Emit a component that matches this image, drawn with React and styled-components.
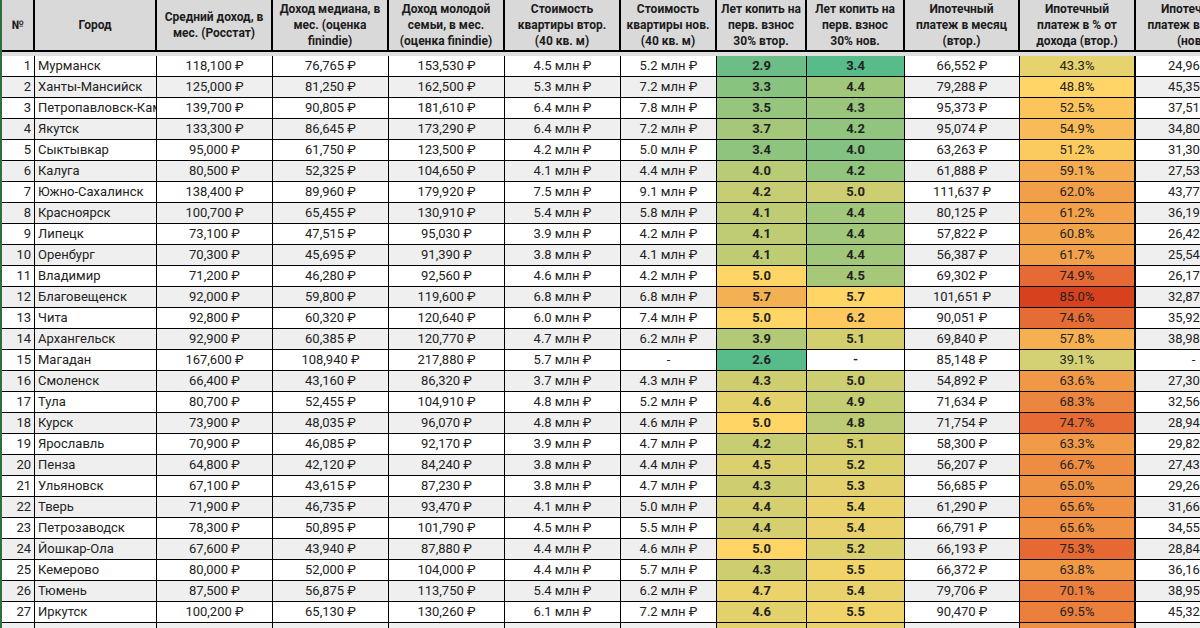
import React from "react";
import styled, { createGlobalStyle } from "styled-components";

const COLS = "33px 122px 116px 116px 116px 116px 96px 90px 98px 115px 116px 116px";

const GlobalStyle = createGlobalStyle`
  html, body { margin: 0; padding: 0; background: #ffffff; }
  body { font-family: Roboto, "Liberation Sans", Arial, sans-serif; }
  * { box-sizing: border-box; }
`;

const Sheet = styled.div`
  width: 1200px;
  height: 628px;
  overflow: hidden;
  border-left: 2px solid #2f6f3e;
  background: #fff;
`;

const Table = styled.div`
  width: 1252px;
`;

const HeaderRow = styled.div`
  display: grid;
  grid-template-columns: ${COLS};
  height: 52px;
  background: #d9d9d9;
  border-bottom: 2px solid #000;
`;

const HeadCell = styled.div`
  display: flex;
  align-items: center;
  justify-content: center;
  text-align: center;
  font-weight: 700;
  font-size: 12px;
  line-height: 16px;
  color: #1c1c1c;
  border-right: 2px solid #000;
  white-space: nowrap;
  overflow: hidden;
`;

const Band = styled.div`
  height: 4px;
  background: #dedede;
`;

const Row = styled.div`
  display: grid;
  grid-template-columns: ${COLS};
  height: 21px;
  border-bottom: 1px solid #000;
  background: ${(p) => (p.$even ? "#efefef" : "#ffffff")};
`;

const Cell = styled.div`
  font-size: 13px;
  line-height: 20px;
  color: #222;
  white-space: nowrap;
  overflow: hidden;
  text-align: ${(p) => p.$align || "center"};
  padding: ${(p) => (p.$align === "right" ? "0 3px 0 0" : p.$align === "left" ? "0 0 0 3px" : "0")};
  border-right: ${(p) => (p.$thick ? "2px" : "1px")} solid #000;
  font-weight: ${(p) => (p.$bold ? 700 : 400)};
  background: ${(p) => p.$bg || "transparent"};
`;

function hex(h) {
  return [1, 3, 5].map((i) => parseInt(h.slice(i, i + 2), 16));
}
function scale(stops, v) {
  if (v <= stops[0][0]) return stops[0][1];
  for (let i = 0; i < stops.length - 1; i++) {
    const [a, ca] = stops[i];
    const [b, cb] = stops[i + 1];
    if (v <= b) {
      const t = (v - a) / (b - a);
      const A = hex(ca);
      const B = hex(cb);
      const c = A.map((x, k) => Math.round(x + (B[k] - x) * t));
      return `rgb(${c[0]},${c[1]},${c[2]})`;
    }
  }
  return stops[stops.length - 1][1];
}

const VTOR = [[2.6, "#57bb8a"], [5.0, "#ffd666"], [5.7, "#f4b154"]];
const NOV = [[3.4, "#57bb8a"], [5.7, "#ffd666"], [6.2, "#fdc95f"]];
const PCT = [
  [39.1, "#d3d173"],
  [48.8, "#fed566"],
  [52.5, "#fbc55c"],
  [55, "#f9bb57"],
  [62, "#f29f49"],
  [75, "#e66a35"],
  [85, "#d8411e"],
];

const headers = [
  ["№"],
  ["Город"],
  ["Средний доход, в", "мес. (Росстат)"],
  ["Доход медиана, в", "мес. (оценка", "finindie)"],
  ["Доход молодой", "семьи, в мес.", "(оценка finindie)"],
  ["Стоимость", "квартиры втор.", "(40 кв. м)"],
  ["Стоимость", "квартиры нов.", "(40 кв. м)"],
  ["Лет копить на", "перв. взнос", "30% втор."],
  ["Лет копить на", "перв. взнос", "30% нов."],
  ["Ипотечный", "платеж в месяц", "(втор.)"],
  ["Ипотечный", "платеж в % от", "дохода (втор.)"],
  ["Ипотечный", "платеж в месяц", "(нов.)"],
];

const data = [
  ["Мурманск", "118,100", "76,765", "153,530", "4.5", "5.2", "2.9", "3.4", "66,552", "43.3", "24,960"],
  ["Ханты-Мансийск", "125,000", "81,250", "162,500", "5.3", "7.2", "3.3", "4.4", "79,288", "48.8", "45,350"],
  ["Петропавловск-Камчатский", "139,700", "90,805", "181,610", "6.4", "7.8", "3.5", "4.3", "95,373", "52.5", "37,510"],
  ["Якутск", "133,300", "86,645", "173,290", "6.4", "7.2", "3.7", "4.2", "95,074", "54.9", "34,800"],
  ["Сыктывкар", "95,000", "61,750", "123,500", "4.2", "5.0", "3.4", "4.0", "63,263", "51.2", "31,300"],
  ["Калуга", "80,500", "52,325", "104,650", "4.1", "4.4", "4.0", "4.2", "61,888", "59.1", "27,530"],
  ["Южно-Сахалинск", "138,400", "89,960", "179,920", "7.5", "9.1", "4.2", "5.0", "111,637", "62.0", "43,770"],
  ["Красноярск", "100,700", "65,455", "130,910", "5.4", "5.8", "4.1", "4.4", "80,125", "61.2", "36,190"],
  ["Липецк", "73,100", "47,515", "95,030", "3.9", "4.2", "4.1", "4.4", "57,822", "60.8", "26,420"],
  ["Оренбург", "70,300", "45,695", "91,390", "3.8", "4.1", "4.1", "4.4", "56,387", "61.7", "25,540"],
  ["Владимир", "71,200", "46,280", "92,560", "4.6", "4.2", "5.0", "4.5", "69,302", "74.9", "26,170"],
  ["Благовещенск", "92,000", "59,800", "119,600", "6.8", "6.8", "5.7", "5.7", "101,651", "85.0", "32,870"],
  ["Чита", "92,800", "60,320", "120,640", "6.0", "7.4", "5.0", "6.2", "90,051", "74.6", "35,920"],
  ["Архангельск", "92,900", "60,385", "120,770", "4.7", "6.2", "3.9", "5.1", "69,840", "57.8", "38,980"],
  ["Магадан", "167,600", "108,940", "217,880", "5.7", null, "2.6", null, "85,148", "39.1", null],
  ["Смоленск", "66,400", "43,160", "86,320", "3.7", "4.3", "4.3", "5.0", "54,892", "63.6", "27,300"],
  ["Тула", "80,700", "52,455", "104,910", "4.8", "5.2", "4.6", "4.9", "71,634", "68.3", "32,560"],
  ["Курск", "73,900", "48,035", "96,070", "4.8", "4.6", "5.0", "4.8", "71,754", "74.7", "28,940"],
  ["Ярославль", "70,900", "46,085", "92,170", "3.9", "4.7", "4.2", "5.1", "58,300", "63.3", "29,820"],
  ["Пенза", "64,800", "42,120", "84,240", "3.8", "4.4", "4.5", "5.2", "56,207", "66.7", "27,430"],
  ["Ульяновск", "67,100", "43,615", "87,230", "3.8", "4.7", "4.3", "5.3", "56,685", "65.0", "29,260"],
  ["Тверь", "71,900", "46,735", "93,470", "4.1", "5.0", "4.4", "5.4", "61,290", "65.6", "31,660"],
  ["Петрозаводск", "78,300", "50,895", "101,790", "4.5", "5.5", "4.4", "5.4", "66,791", "65.6", "34,550"],
  ["Йошкар-Ола", "67,600", "43,940", "87,880", "4.4", "4.6", "5.0", "5.2", "66,193", "75.3", "28,840"],
  ["Кемерово", "80,000", "52,000", "104,000", "4.4", "5.7", "4.3", "5.5", "66,372", "63.8", "36,160"],
  ["Тюмень", "87,500", "56,875", "113,750", "5.4", "6.2", "4.7", "5.4", "79,706", "70.1", "38,950"],
  ["Иркутск", "100,200", "65,130", "130,260", "6.1", "7.2", "4.6", "5.5", "90,470", "69.5", "45,320"],
];

const rub = (v) => (v == null ? "-" : `${v} ₽`);
const mln = (v) => (v == null ? "-" : `${v} млн ₽`);

function DataRow({ n, r }) {
  const [city, avg, med, fam, pv, pn, yv, yn, pay, pct, payN] = r;
  return (
    <Row $even={n % 2 === 0}>
      <Cell $align="right">{n}</Cell>
      <Cell $align="left">{city}</Cell>
      <Cell>{rub(avg)}</Cell>
      <Cell>{rub(med)}</Cell>
      <Cell>{rub(fam)}</Cell>
      <Cell>{mln(pv)}</Cell>
      <Cell>{mln(pn)}</Cell>
      <Cell $bold $bg={yv == null ? "#fff" : scale(VTOR, parseFloat(yv))}>{yv ?? "-"}</Cell>
      <Cell $bold $bg={yn == null ? "#fff" : scale(NOV, parseFloat(yn))}>{yn ?? "-"}</Cell>
      <Cell>{rub(pay)}</Cell>
      <Cell $thick $bg={scale(PCT, parseFloat(pct))}>{pct}%</Cell>
      <Cell>{rub(payN)}</Cell>
    </Row>
  );
}

export default function App() {
  return (
    <>
      <GlobalStyle />
      <Sheet>
        <Table>
          <HeaderRow>
            {headers.map((h, i) => (
              <HeadCell key={i}>
                <div>
                  {h.map((line, j) => (
                    <div key={j}>{line}</div>
                  ))}
                </div>
              </HeadCell>
            ))}
          </HeaderRow>
          <Band />
          {data.map((r, i) => (
            <DataRow key={i} n={i + 1} r={r} />
          ))}
          <Row $even>
            <Cell $align="right"></Cell>
            <Cell></Cell>
            <Cell></Cell>
            <Cell></Cell>
            <Cell></Cell>
            <Cell></Cell>
            <Cell></Cell>
            <Cell $bg={scale(VTOR, 4.6)}></Cell>
            <Cell $bg={scale(NOV, 5.4)}></Cell>
            <Cell></Cell>
            <Cell $thick $bg={scale(PCT, 66)}></Cell>
            <Cell></Cell>
          </Row>
        </Table>
      </Sheet>
    </>
  );
}
